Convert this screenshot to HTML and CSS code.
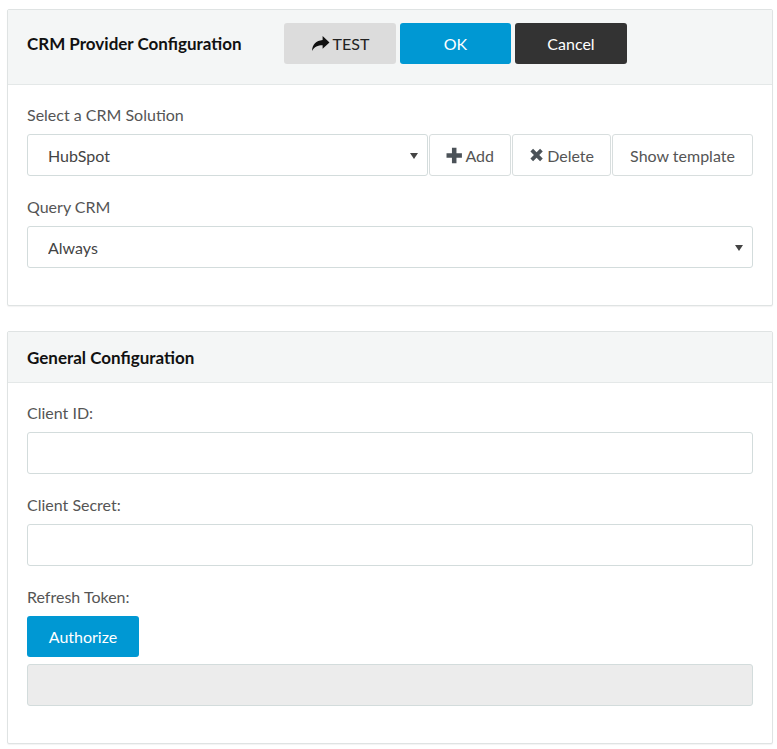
FILE: index.html
```html
<!DOCTYPE html>
<html lang="en">
<head>
<meta charset="UTF-8">
<meta name="viewport" content="width=device-width, initial-scale=1.0">
<title>CRM Provider Configuration</title>
<link rel="stylesheet" href="styles.css">
</head>
<body>

<div class="panel">
    <div class="panel-heading">
        <h3 class="panel-title">CRM Provider Configuration</h3>
        <div class="actions">
            <button class="btn btn-test">
                <svg class="icon" width="19" height="17" viewBox="0 0 18 16"><path d="M11 1 L17.5 7 L11 13 V9.6 C6.5 9.6 3.2 10.8 1 15 C1.3 8.6 4.8 5.2 11 4.6 Z" fill="#111"/></svg>TEST
            </button>
            <button class="btn btn-primary">OK</button>
            <button class="btn btn-dark">Cancel</button>
        </div>
    </div>
    <div class="panel-body">
        <div class="form-group">
            <label>Select a CRM Solution</label>
            <div class="input-row">
                <div class="select-wrap">
                    <select class="form-control">
                        <option>HubSpot</option>
                    </select>
                </div>
                <button class="btn btn-default">
                    <svg class="icon" width="17" height="17" viewBox="0 0 16 16"><path d="M5.8 0.5 H10.2 V5.8 H15.5 V10.2 H10.2 V15.5 H5.8 V10.2 H0.5 V5.8 H5.8 Z" fill="#4b5258"/></svg>Add
                </button>
                <button class="btn btn-default">
                    <svg class="icon" width="16" height="16" viewBox="0 0 16 16"><path d="M1.5 4.3 L4.3 1.5 L8 5.2 L11.7 1.5 L14.5 4.3 L10.8 8 L14.5 11.7 L11.7 14.5 L8 10.8 L4.3 14.5 L1.5 11.7 L5.2 8 Z" fill="#4b5258"/></svg>Delete
                </button>
                <button class="btn btn-default">Show template</button>
            </div>
        </div>
        <div class="form-group">
            <label>Query CRM</label>
            <div class="select-wrap">
                <select class="form-control">
                    <option>Always</option>
                </select>
            </div>
        </div>
    </div>
</div>

<div class="panel">
    <div class="panel-heading short">
        <h3 class="panel-title">General Configuration</h3>
    </div>
    <div class="panel-body">
        <div class="form-group">
            <label for="clientId">Client ID:</label>
            <input type="text" id="clientId" class="form-control">
        </div>
        <div class="form-group">
            <label for="clientSecret">Client Secret:</label>
            <input type="text" id="clientSecret" class="form-control">
        </div>
        <div class="form-group">
            <label for="refreshToken">Refresh Token:</label>
            <button class="btn btn-primary btn-auth">Authorize</button>
            <input type="text" id="refreshToken" class="form-control" readonly>
        </div>
    </div>
</div>

</body>
</html>
```

FILE: styles.css
```css
body {
    font-family: Lato, "Open Sans", sans-serif;
    font-size: 16px;
    color: #555;
    margin: 0;
    padding: 9px 4px 0 7px;
    background-color: #fff;
}
.panel {
    border: 1px solid #dfe3e3;
    border-radius: 2px;
    margin-bottom: 25px;
    background-color: #fff;
    box-shadow: 0 1px 1px rgba(0,0,0,0.05);
}
.panel-heading {
    display: flex;
    align-items: center;
    box-sizing: border-box;
    height: 75px;
    padding: 13px 19px 20px;
    background-color: #f4f6f6;
    border-bottom: 1px solid #e4e8e8;
}
.panel-heading.short {
    height: 51px;
    padding: 0 19px;
}
.panel-title {
    margin: 0;
    font-size: 17px;
    font-weight: bold;
    color: #111;
    width: 257px;
}
.actions {
    display: flex;
    gap: 4px;
}
.btn {
    font-family: inherit;
    font-size: 16px;
    height: 41px;
    border: 1px solid transparent;
    border-radius: 3px;
    padding: 0 16px;
    cursor: pointer;
    display: inline-flex;
    align-items: center;
    justify-content: center;
}
.icon {
    margin-right: 3px;
}
.btn-test {
    width: 112px;
    background-color: #dcdcdc;
    color: #222;
}
.actions .btn-primary {
    width: 111px;
}
.btn-primary {
    background-color: #0098d3;
    color: #fff;
}
.btn-dark {
    width: 112px;
    background-color: #333;
    color: #fff;
}
.btn-default {
    height: 42px;
    background-color: #fff;
    border-color: #d8dede;
    color: #555;
}
.panel-body {
    padding: 19px 19px 37px;
    display: flex;
    flex-direction: column;
    gap: 20px;
}
.form-group {
    display: flex;
    flex-direction: column;
}
label {
    display: block;
    line-height: 22px;
    margin-bottom: 8px;
}
.form-control {
    box-sizing: border-box;
    width: 100%;
    height: 42px;
    border: 1px solid #d3dcdc;
    border-radius: 3px;
    background-color: #fff;
    font-family: inherit;
    font-size: 16px;
    color: #444;
    padding: 0 20px;
}
.input-row {
    display: flex;
    gap: 1px;
}
.input-row .select-wrap {
    width: 401px;
    flex: none;
}
.input-row .btn:nth-child(2) {
    width: 82px;
}
.input-row .btn:nth-child(3) {
    width: 99px;
}
.input-row .btn:nth-child(4) {
    width: 142px;
}
.select-wrap {
    position: relative;
}
select.form-control {
    appearance: none;
    -webkit-appearance: none;
}
.select-wrap:after {
    content: '';
    position: absolute;
    right: 10px;
    top: 19px;
    border-left: 4px solid transparent;
    border-right: 4px solid transparent;
    border-top: 6px solid #444;
    pointer-events: none;
}
.btn-auth {
    width: 112px;
    margin-bottom: 7px;
    padding: 0;
}
input[readonly] {
    background-color: #ececec;
}
```
